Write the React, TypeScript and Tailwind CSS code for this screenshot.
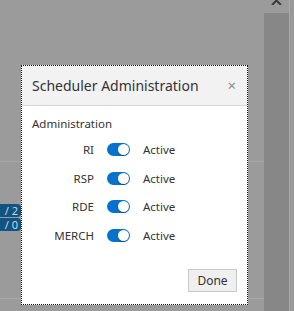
import React, { useState } from "react";

const systems = ["RI", "RSP", "RDE", "MERCH"];

function Toggle({ on, onClick }: { on: boolean; onClick: () => void }) {
  return (
    <button
      type="button"
      onClick={onClick}
      className={`relative flex h-[13px] w-[23px] items-center rounded-full ${on ? "bg-[#0572ce]" : "bg-[#b3b3b3]"}`}
    >
      <span
        className={`absolute top-[1px] h-[11px] w-[11px] rounded-full bg-white shadow-[0_1px_1px_rgba(0,0,0,0.35)] ${on ? "left-[11px]" : "left-[1px]"}`}
      />
    </button>
  );
}

export default function App() {
  const [active, setActive] = useState<boolean[]>([true, true, true, true]);

  const flip = (i: number) => {
    setActive((prev) => prev.map((v, idx) => (idx === i ? !v : v)));
  };

  return (
    <div
      className="relative flex h-[311px] w-[294px] overflow-hidden bg-[#9b9b9b] text-[#333]"
      style={{ fontFamily: '"Noto Sans", "Open Sans", sans-serif' }}
    >
      {/* page behind the overlay */}
      <div className="flex flex-1 flex-col">
        <div className="h-[162px] border-b border-[#a9a9a9]" />
        <div className="mt-[42px] flex flex-col gap-[1px]">
          <div className="flex h-[13px] w-[21px] items-center justify-end rounded-r-[4px] bg-[#0f5482] pr-[3px] text-[11px] leading-none text-[#c9d6df]">
            / 2
          </div>
          <div className="flex h-[13px] w-[21px] items-center justify-end rounded-r-[4px] bg-[#0f5482] pr-[3px] text-[11px] leading-none text-[#c9d6df]">
            / 0
          </div>
        </div>
        <div className="mt-[67px] border-b border-[#a9a9a9]" />
      </div>

      {/* scrollbar */}
      <div className="flex w-[25px] flex-col">
        <div className="flex h-[13px] items-start justify-center">
          <svg width="11" height="6" viewBox="0 0 11 6" className="-mt-[1px]">
            <path d="M1 6 L5.5 1.5 L10 6" fill="none" stroke="#3a3a3a" strokeWidth="2" />
          </svg>
        </div>
        <div className="flex-1 bg-[#878787]" />
      </div>
      <div className="w-[5px] border-l border-[#aaaaaa] bg-[#999]" />

      {/* dialog */}
      <div className="absolute left-[21px] top-[65px] flex h-[240px] w-[227px] flex-col border border-dotted border-[#111] bg-white">
        <div className="flex h-[40px] items-center justify-between border-b border-[#d6d6d6] bg-[#f2f2f2] pl-[10px] pr-[11px]">
          <span className="text-[14px] leading-none">Scheduler Administration</span>
          <span className="text-[15px] leading-none text-[#8a8a8a]">×</span>
        </div>
        <div className="flex flex-1 flex-col px-[10px] pt-[10px]">
          <div className="text-[11.5px] leading-[16px]">Administration</div>
          <div className="mt-[11px] flex flex-col gap-[15px]">
            {systems.map((s, i) => (
              <div key={s} className="flex h-[13.5px] items-center text-[11.5px]">
                <span className="w-[62px] text-right">{s}</span>
                <span className="ml-[13px]">
                  <Toggle on={active[i]} onClick={() => flip(i)} />
                </span>
                <span className="ml-[13px]">{active[i] ? "Active" : "Inactive"}</span>
              </div>
            ))}
          </div>
          <div className="mt-auto mb-[12px] flex justify-end">
            <button
              type="button"
              className="h-[23px] w-[49px] border border-[#c8c8c8] bg-[#efefef] text-[12px] text-[#333]"
            >
              Done
            </button>
          </div>
        </div>
      </div>
    </div>
  );
}
